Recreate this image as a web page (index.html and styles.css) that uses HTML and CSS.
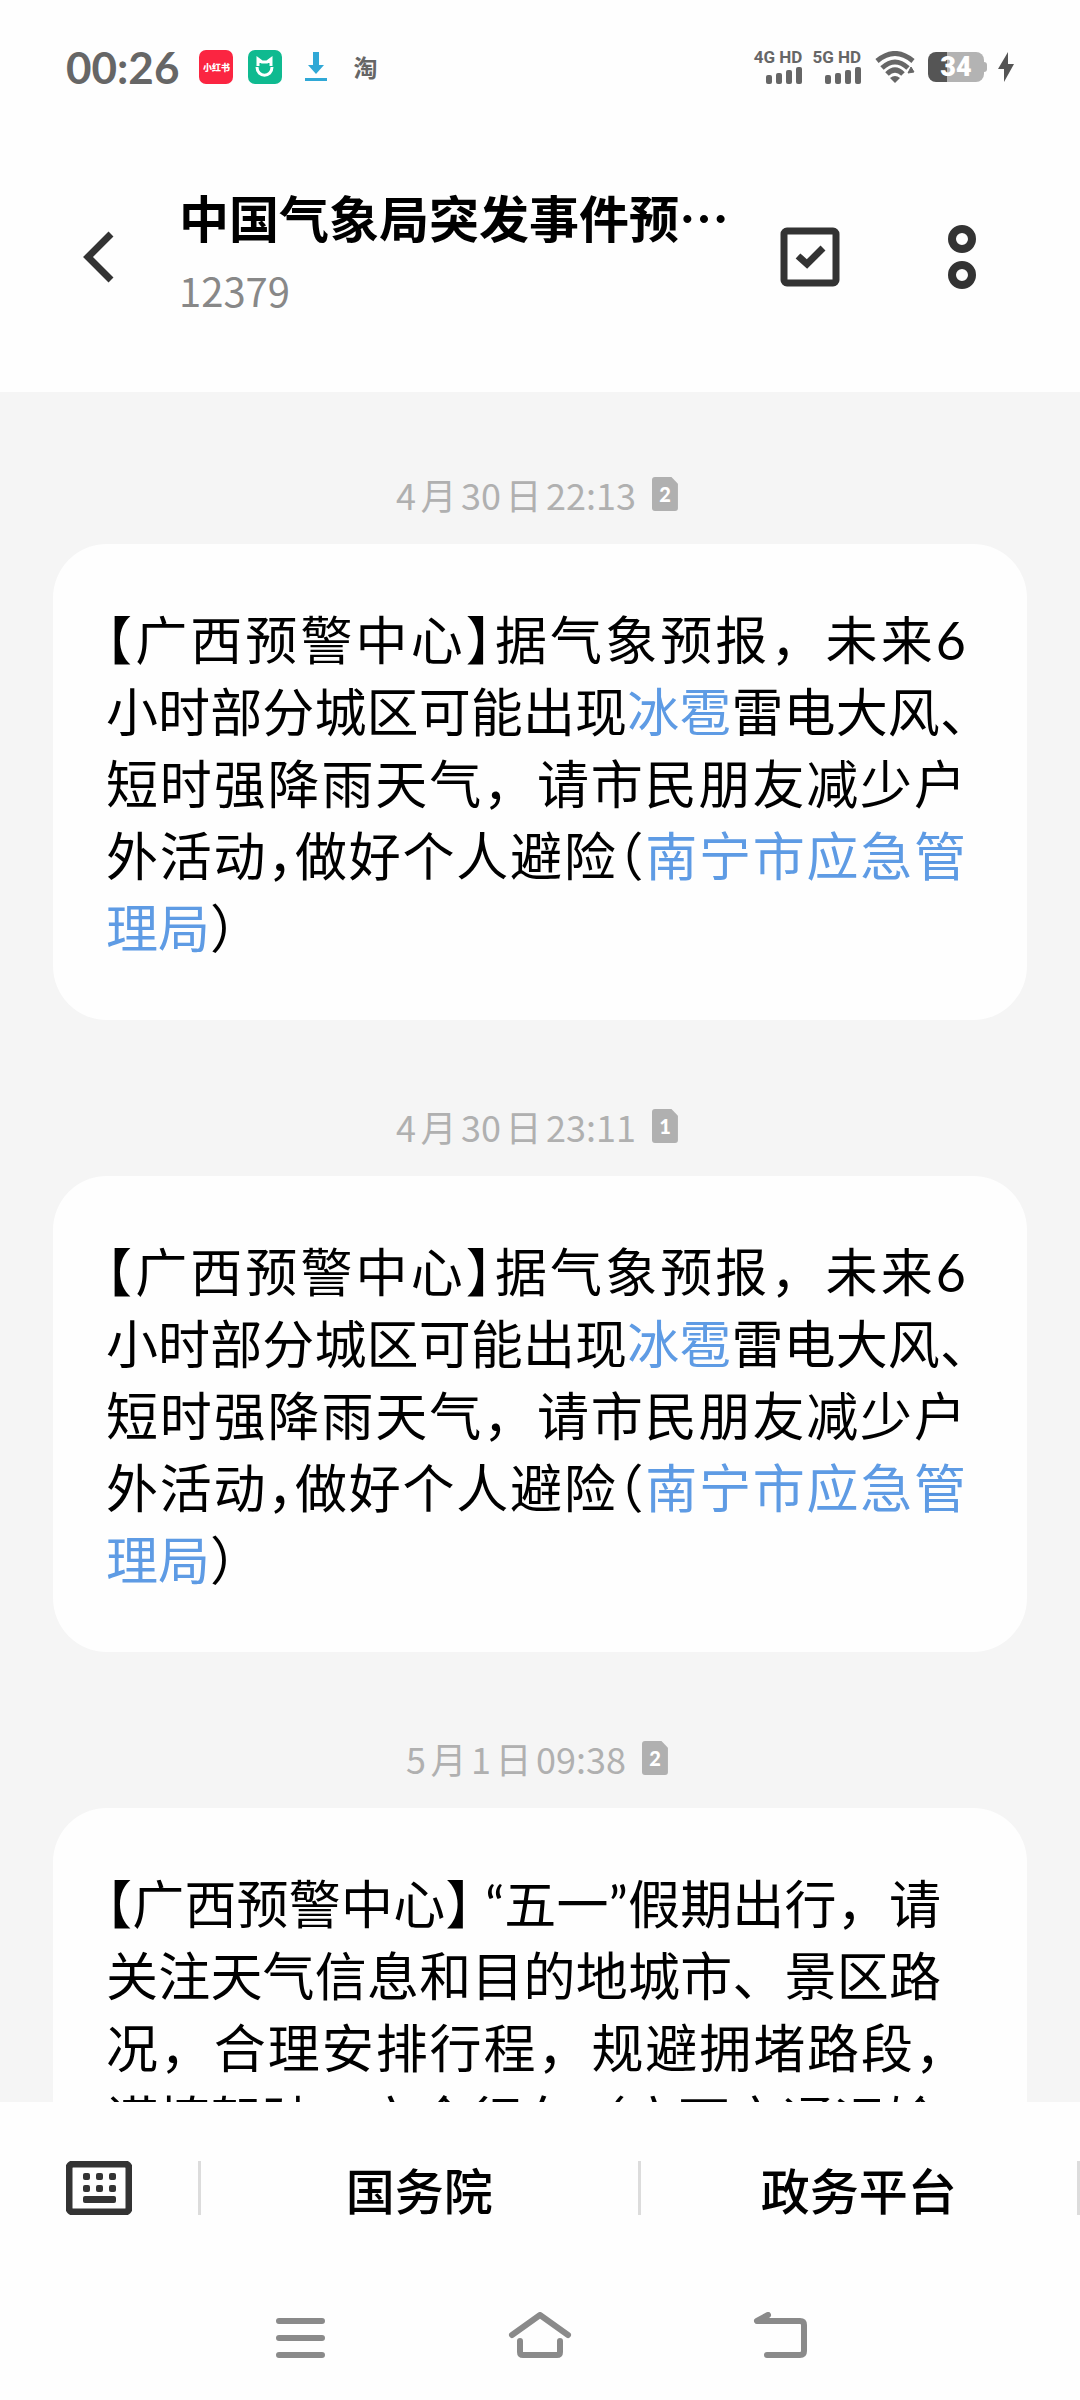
FILE: index.html
```html
<!DOCTYPE html>
<html lang="zh-CN">
<head>
    <meta charset="UTF-8">
    <meta name="viewport" content="width=device-width, initial-scale=1.0">
    <title>短信</title>
    <link rel="stylesheet" href="styles.css">
</head>
<body>
    <div class="status">
        <span class="clock">00:26</span>
        <span class="app red">小红书</span>
        <span class="app green">
            <svg width="20" height="22" viewBox="0 0 20 22" fill="none" stroke="#fff" stroke-width="3">
                <path d="M3 10V3l4 3h5l4-3v7"/>
                <path d="M2 11c0 11 15 11 15 0"/>
            </svg>
        </span>
        <svg class="down" width="22" height="32" viewBox="0 0 22 32" fill="#30a8d6">
            <path d="M8 1h6v13h5l-8 9-8-9h5z"/>
            <path d="M0 27h22v3H0z"/>
        </svg>
        <span class="tao">淘</span>

        <div class="right">
            <div class="signal">
                <span>4G HD</span>
                <svg width="36" height="17" viewBox="0 0 36 17" fill="#666">
                    <rect x="0" y="8" width="6" height="9" rx="2"/>
                    <rect x="10" y="6" width="6" height="11" rx="2"/>
                    <rect x="20" y="3" width="6" height="14" rx="2"/>
                    <rect x="30" y="0" width="6" height="17" rx="2"/>
                </svg>
            </div>
            <div class="signal">
                <span>5G HD</span>
                <svg width="36" height="17" viewBox="0 0 36 17" fill="#666">
                    <rect x="0" y="8" width="6" height="9" rx="2"/>
                    <rect x="10" y="6" width="6" height="11" rx="2"/>
                    <rect x="20" y="3" width="6" height="14" rx="2"/>
                    <rect x="30" y="0" width="6" height="17" rx="2"/>
                </svg>
            </div>
            <svg class="wifi" width="40" height="32" viewBox="0 0 40 32" fill="none" stroke="#666" stroke-width="5">
                <path d="M2 10Q20-5 38 10"/>
                <path d="M7 17Q20 5 33 17"/>
                <path d="M12 23Q20 15 28 23"/>
                <path d="M15 27q5-4 10 0l-5 5z" fill="#666" stroke="none"/>
                <path d="M33 22l6-1-3-5z" fill="#666" stroke="#666" stroke-width="1"/>
            </svg>
            <div class="battery"><b>34</b></div>
            <svg class="bolt" width="16" height="30" viewBox="0 0 16 30" fill="#555">
                <path d="M10 0L0 17h6v13l10-18h-6z"/>
            </svg>
        </div>
    </div>

    <div class="header">
        <button class="back" aria-label="返回">
            <svg width="32" height="52" viewBox="0 0 32 52" fill="none" stroke="#333" stroke-width="7">
                <path d="M29 3L6 26l23 23"/>
            </svg>
        </button>
        <div class="name">
            <h1>中国气象局突发事件预…</h1>
            <p>12379</p>
        </div>
        <button class="check" aria-label="选择">
            <svg width="60" height="60" viewBox="0 0 60 60" fill="none" stroke="#333">
                <rect x="4" y="4" width="52" height="52" rx="3" stroke-width="7"/>
                <path d="M18 29l9 8 16-16" stroke-width="7"/>
            </svg>
        </button>
        <button class="more" aria-label="更多">
            <svg width="28" height="64" viewBox="0 0 28 64" fill="none" stroke="#333" stroke-width="8">
                <circle cx="14" cy="14" r="10"/>
                <circle cx="14" cy="50" r="10"/>
            </svg>
        </button>
    </div>

    <div class="chat">
        <p class="time">4月30日22:13 <span class="sim">2</span></p>
        <div class="card">
            <p><i>【</i>广西预警中心<i>】</i>据气象预报，未来6小时部分城区可能出现<a href="#">冰雹</a>雷电大风<i>、</i>短时强降雨天气，请市民朋友减少户外活动<i>，</i>做好个人避险<i>（</i><a href="#">南宁市应急管理局</a><i>）</i></p>
        </div>

        <p class="time">4月30日23:11 <span class="sim">1</span></p>
        <div class="card">
            <p><i>【</i>广西预警中心<i>】</i>据气象预报，未来6小时部分城区可能出现<a href="#">冰雹</a>雷电大风<i>、</i>短时强降雨天气，请市民朋友减少户外活动<i>，</i>做好个人避险<i>（</i><a href="#">南宁市应急管理局</a><i>）</i></p>
        </div>

        <p class="time">5月1日09:38 <span class="sim">2</span></p>
        <div class="card last">
            <p><i>【</i>广西预警中心<i>】</i> “五一”假期出行，请关注天气信息和目的地城市、景区路况，合理安排行程，规避拥堵路段<i>，</i>谨慎驾驶，安全行车<i>。</i><i>（</i>广西交通运输</p>
        </div>
    </div>

    <div class="menu">
        <button class="key" aria-label="键盘">
            <svg width="66" height="54" viewBox="0 0 66 54" fill="#333">
                <rect x="3" y="3" width="60" height="48" rx="4" fill="none" stroke="#333" stroke-width="7"/>
                <rect x="17" y="12" width="7" height="7" rx="2"/>
                <rect x="30" y="12" width="7" height="7" rx="2"/>
                <rect x="43" y="12" width="7" height="7" rx="2"/>
                <rect x="17" y="24" width="7" height="7" rx="2"/>
                <rect x="30" y="24" width="7" height="7" rx="2"/>
                <rect x="43" y="24" width="7" height="7" rx="2"/>
                <rect x="17" y="35" width="33" height="7" rx="2"/>
            </svg>
        </button>
        <button class="item">国务院</button>
        <button class="item">政务平台</button>
    </div>

    <div class="nav">
        <button aria-label="最近任务">
            <svg width="64" height="52" viewBox="0 0 64 52" fill="none" stroke="#8a8a8a" stroke-width="6" stroke-linecap="round">
                <path d="M11 9h43M11 26h43M11 43h43"/>
            </svg>
        </button>
        <button aria-label="主屏幕">
            <svg width="64" height="52" viewBox="0 0 64 52" fill="none" stroke="#8a8a8a" stroke-width="6" stroke-linecap="round" stroke-linejoin="round">
                <path d="M4 23L32 3l28 20"/>
                <path d="M12 29v11q0 3 3 3h34q3 0 3-3V29"/>
            </svg>
        </button>
        <button aria-label="返回上一级">
            <svg width="64" height="52" viewBox="0 0 64 52" fill="none" stroke="#8a8a8a" stroke-width="6" stroke-linecap="round" stroke-linejoin="round">
                <path d="M20 3L9 9h43q4 0 4 4v26q0 4-4 4H19"/>
            </svg>
        </button>
    </div>
</body>
</html>
```
FILE: styles.css
```css
*{
    margin: 0;
    padding: 0;
    box-sizing: border-box;
}
body{
    display: flex;
    flex-direction: column;
    height: 100vh;
    background: #fefefe;
    color: #000;
    font-family: "Noto Sans CJK SC", sans-serif;
}
button{
    border: none;
    background: none;
    color: inherit;
    font-family: inherit;
    cursor: pointer;
}
svg{
    display: block;
}

/* 状态栏 */
.status{
    display: flex;
    align-items: center;
    padding: 42px 66px 0;
    height: 92px;
    color: #666;
}
.clock{
    font: 700 44px/50px Lato, sans-serif;
    margin-right: 20px;
}
.app{
    display: flex;
    align-items: center;
    justify-content: center;
    width: 34px;
    height: 34px;
    margin-right: 15px;
    border-radius: 7px;
    color: #fff;
}
.red{
    background: #fb2541;
    font-size: 9px;
    font-weight: 900;
}
.green{
    background: #0fba90;
}
.down{
    margin: 0 26px 0 8px;
}
.tao{
    font-size: 24px;
    line-height: 34px;
    font-weight: 700;
}
.right{
    display: flex;
    align-items: center;
    margin-left: auto;
}
.signal{
    display: flex;
    flex-direction: column;
    align-items: flex-end;
    gap: 3px;
    margin-right: 10px;
    font: 700 17px/14px Roboto, sans-serif;
}
.wifi{
    margin: 0 13px 0 4px;
}
.battery{
    position: relative;
    width: 56px;
    height: 30px;
    margin-right: 14px;
    border-radius: 8px;
    background: linear-gradient(to right, #555 34%, #b3b3b3 34%);
    color: #fff;
    font: 700 27px/31px Roboto, sans-serif;
    text-align: center;
}
.battery::after{
    content: "";
    position: absolute;
    top: 10px;
    right: -3px;
    width: 3px;
    height: 10px;
    border-radius: 0 3px 3px 0;
    background: #b3b3b3;
}

/* 标题栏 */
.header{
    display: flex;
    align-items: center;
    height: 300px;
    padding: 30px 104px 0 82px;
}
.name{
    flex: 1;
    margin-left: 65px;
    padding-bottom: 14px;
}
.name h1{
    font-size: 50px;
    line-height: 72px;
    font-weight: 700;
    white-space: nowrap;
}
.name p{
    font-size: 40px;
    line-height: 60px;
    padding-top: 8px;
    color: #888;
}
.more{
    margin-left: 108px;
}

/* 短信列表 */
.chat{
    flex: 1;
    min-height: 0;
    overflow: hidden;
    padding: 0 53px;
    background: #f5f5f5;
}
.time{
    display: flex;
    align-items: center;
    justify-content: center;
    gap: 16px;
    padding: 80px 6px 28px 0;
    color: #b0b0b0;
    font-size: 36px;
    line-height: 44px;
    text-autospace: normal;
}
.card + .time{
    padding-top: 84px;
}
.sim{
    width: 26px;
    height: 34px;
    border-radius: 3px;
    background: #b0b0b0;
    clip-path: polygon(0 0, 75% 0, 100% 20%, 100% 100%, 0 100%);
    color: #fff;
    font: 900 20px/34px Lato, sans-serif;
    text-align: center;
}
.card{
    padding: 60px 61px 56px 53px;
    border-radius: 54px;
    background: #fefefe;
}
.card p{
    font-family: Lato, "Noto Sans CJK SC", sans-serif;
    font-size: 52px;
    line-height: 72px;
    text-align: justify;
    text-autospace: no-autospace;
}
.card.last{
    padding-right: 86px;
}
.card i{
    font-style: normal;
    font-feature-settings: "halt";
}
.card a{
    color: #5e9be4;
    text-decoration: none;
}

/* 底部菜单 */
.menu{
    display: flex;
    align-items: center;
    height: 172px;
}
.key{
    padding: 0 66px;
}
.item{
    display: flex;
    align-items: center;
    justify-content: center;
    flex: 1;
    height: 54px;
    border-left: 3px solid #dcdcdc;
    font-size: 49px;
    font-weight: 500;
}
.item:last-child{
    border-right: 3px solid #dcdcdc;
}
.nav{
    display: flex;
    justify-content: center;
    gap: 176px;
    height: 126px;
    padding-top: 38px;
    align-items: flex-start;
}
```
